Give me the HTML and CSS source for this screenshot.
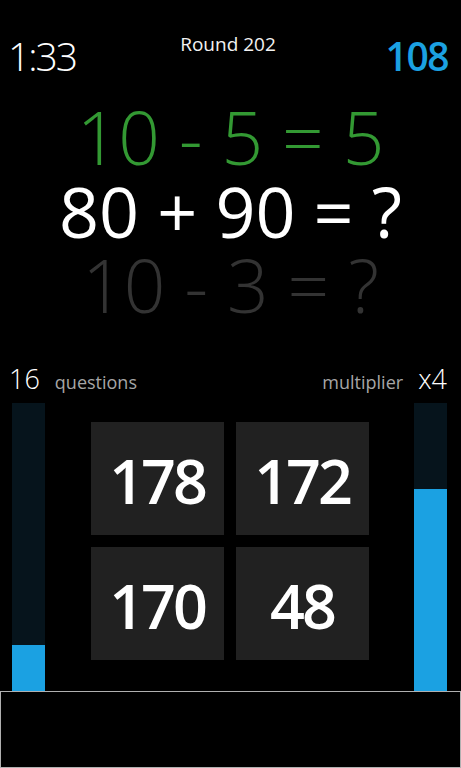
FILE: index.html
```html
<!DOCTYPE html>
<html>
<head>
<meta charset="utf-8">
<link rel="stylesheet" href="styles.css">
</head>
<body>
<div class="screen">
  <header class="header">
    <div class="timer">1:33</div>
    <div class="round">Round 202</div>
    <div class="score">108</div>
  </header>
  <section class="equations">
    <div class="eq eq-done">10 - 5 = 5</div>
    <div class="eq eq-current">80 + 90 = ?</div>
    <div class="eq eq-next">10 - 3 = ?</div>
  </section>
  <section class="stats">
    <div class="stat">
      <span class="stat-value">16</span>
      <span class="stat-label">questions</span>
    </div>
    <div class="stat">
      <span class="stat-label">multiplier</span>
      <span class="stat-value">x4</span>
    </div>
  </section>
  <section class="game">
    <div class="bar"><div class="bar-fill" style="height:46px"></div></div>
    <div class="answers">
      <div class="tile">178</div>
      <div class="tile">172</div>
      <div class="tile">170</div>
      <div class="tile">48</div>
    </div>
    <div class="bar"><div class="bar-fill" style="height:202px"></div></div>
  </section>
  <footer class="footer"></footer>
</div>
</body>
</html>
```

FILE: styles.css
```css
* { box-sizing: border-box; }
html, body {
  margin: 0;
  padding: 0;
  background: #000;
  color: #fff;
  font-family: "Open Sans", "Noto Sans", sans-serif;
}
.screen {
  width: 461px;
  height: 768px;
  display: flex;
  flex-direction: column;
  overflow: hidden;
}
.header {
  display: grid;
  grid-template-columns: 1fr auto 1fr;
  align-items: start;
  padding: 36px 13px 0 8px;
  height: 76px;
}
.timer {
  font-size: 39px;
  line-height: 40px;
  font-weight: 300;
  letter-spacing: -2px;
}
.round {
  font-size: 19px;
  line-height: 20px;
  margin-top: -2px;
  font-weight: 400;
  color: #f2f2f2;
}
.score {
  justify-self: end;
  font-size: 39px;
  line-height: 40px;
  font-weight: 600;
  letter-spacing: -1.5px;
  color: #1ba1e2;
}
.equations {
  margin-top: 25px;
  display: flex;
  flex-direction: column;
  align-items: center;
  font-weight: 300;
}
.eq {
  white-space: pre;
}
.eq-done {
  font-size: 73px;
  line-height: 72px;
  color: #339933;
}
.eq-current {
  font-size: 70px;
  line-height: 76px;
  font-weight: 400;
  color: #fff;
}
.eq-next {
  font-size: 73px;
  line-height: 72px;
  color: #333;
}
.stats {
  margin-top: 44px;
  height: 27px;
  display: flex;
  justify-content: space-between;
  padding: 0 14px 0 9px;
}
.stat {
  display: flex;
  align-items: baseline;
  gap: 15px;
}
.stat-value {
  font-size: 27px;
  line-height: 27px;
  font-weight: 300;
}
.stat-label {
  font-size: 18px;
  color: #a6a6a6;
}
.game {
  margin-top: 11px;
  height: 288px;
  display: flex;
  justify-content: space-between;
  padding: 0 14px 0 12px;
}
.bar {
  width: 33px;
  height: 100%;
  background: #06141c;
  display: flex;
  flex-direction: column;
  justify-content: flex-end;
}
.bar-fill {
  background: #1ba1e2;
}
.answers {
  margin-top: 19px;
  display: grid;
  grid-template-columns: 133px 133px;
  grid-template-rows: 113px 113px;
  gap: 12px;
  align-self: flex-start;
}
.tile {
  background: #212121;
  display: flex;
  align-items: center;
  justify-content: center;
  font-size: 61px;
  font-weight: 600;
  letter-spacing: -3px;
  line-height: 1;
  padding-top: 4px;
}
.footer {
  height: 77px;
  border: 1px solid #b0b0b0;
  background: #000;
}
```
